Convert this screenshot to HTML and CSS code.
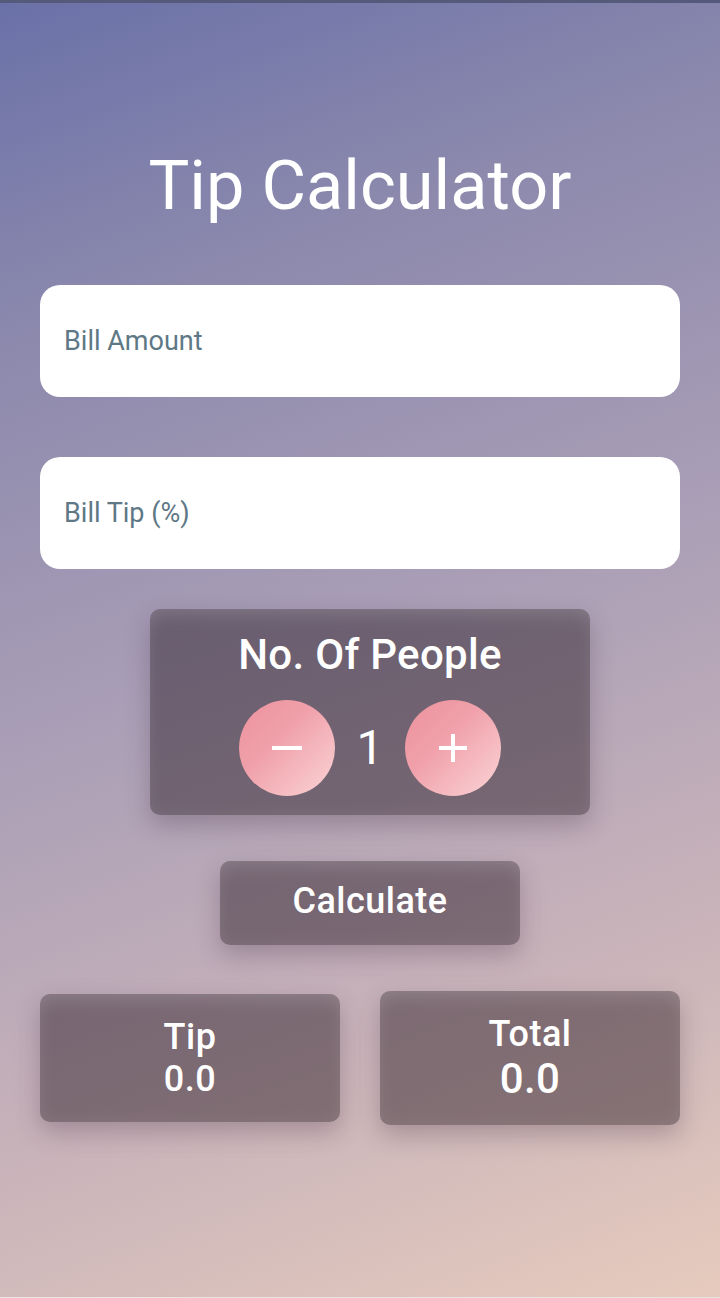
FILE: index.html
```html
<!DOCTYPE html>
<html lang="en">
<head>
<meta charset="utf-8">
<title>Tip Calculator</title>
<link rel="stylesheet" href="styles.css">
</head>
<body>
<div class="statusbar"></div>
<main class="app">
  <h1 class="title">Tip Calculator</h1>
  <input class="field field-first" type="text" placeholder="Bill Amount">
  <input class="field field-second" type="text" placeholder="Bill Tip (%)">
  <section class="card people">
    <div class="people-title">No. Of People</div>
    <div class="stepper">
      <button class="round-btn" aria-label="decrease">
        <svg width="32" height="32" viewBox="0 0 32 32"><path d="M1 16H31" stroke="#fff" stroke-width="4" stroke-linecap="butt"/></svg>
      </button>
      <span class="count">1</span>
      <button class="round-btn" aria-label="increase">
        <svg width="32" height="32" viewBox="0 0 32 32"><path d="M2 16H30M16 2V30" stroke="#fff" stroke-width="4" stroke-linecap="butt"/></svg>
      </button>
    </div>
  </section>
  <button class="card calc">Calculate</button>
  <div class="results">
    <div class="card result tip">
      <div class="label">Tip</div>
      <div class="value">0.0</div>
    </div>
    <div class="card result total">
      <div class="label">Total</div>
      <div class="value">0.0</div>
    </div>
  </div>
</main>
<div class="bottombar"></div>
</body>
</html>
```

FILE: styles.css
```css
html, body {
  margin: 0;
  padding: 0;
}
body {
  width: 720px;
  height: 1298px;
  overflow: hidden;
  display: flex;
  flex-direction: column;
  font-family: Roboto, "Liberation Sans", sans-serif;
  color: #fff;
  background: linear-gradient(160deg, #6a71a8 0%, #8c89ad 22%, #a99eb6 48%, #c9b3ba 75%, #e6cbbd 100%);
}
.statusbar {
  height: 3px;
  background: #55597a;
  flex: none;
}
.bottombar {
  height: 1px;
  background: #ebe3df;
  flex: none;
  margin-top: auto;
}
.app {
  display: flex;
  flex-direction: column;
  align-items: center;
  padding: 143px 40px 0;
}
.title {
  margin: 0;
  font-size: 68.5px;
  line-height: 80px;
  font-weight: 400;
}
.field {
  box-sizing: border-box;
  width: 640px;
  height: 112px;
  border: none;
  outline: none;
  border-radius: 20px;
  background: #fff;
  padding: 0 24px;
  font-family: Roboto, "Liberation Sans", sans-serif;
  font-size: 27px;
  color: #5e7886;
}
.field::placeholder {
  color: #5e7886;
}
.field-first {
  margin-top: 59px;
}
.field-second {
  margin-top: 60px;
}
.card {
  box-sizing: border-box;
  border-radius: 10px;
  background: rgba(30, 15, 25, 0.44);
  box-shadow: 0 10px 24px rgba(60, 40, 60, 0.28), inset 0 16px 22px -12px rgba(255, 255, 255, 0.14), inset 0 0 18px rgba(255, 255, 255, 0.07);
  color: #fff;
}
.people {
  margin-top: 40px;
  margin-left: 20px;
  width: 440px;
  height: 206px;
  padding-top: 22px;
  display: flex;
  flex-direction: column;
  align-items: center;
}
.people-title {
  font-size: 42px;
  line-height: 48px;
  font-weight: 500;
  letter-spacing: 0.3px;
}
.stepper {
  margin-top: 21px;
  display: flex;
  align-items: center;
  gap: 22px;
}
.round-btn {
  width: 96px;
  height: 96px;
  border-radius: 50%;
  border: none;
  padding: 0;
  display: flex;
  align-items: center;
  justify-content: center;
  background: linear-gradient(135deg, #ec929d 0%, #f0a0aa 40%, #f6bfc4 75%, #fad3d6 100%);
}
.count {
  font-size: 48px;
  line-height: 56px;
  font-weight: 400;
}
.calc {
  margin-top: 46px;
  margin-left: 20px;
  width: 300px;
  height: 84px;
  border: none;
  font-family: Roboto, "Liberation Sans", sans-serif;
  font-size: 36px;
  font-weight: 500;
  letter-spacing: 0.5px;
  padding: 0 0 5px 0;
}
.results {
  margin-top: 46px;
  width: 640px;
  display: flex;
  justify-content: space-between;
  align-items: center;
}
.result {
  width: 300px;
  display: flex;
  flex-direction: column;
  align-items: center;
  justify-content: center;
  font-weight: 500;
}
.tip {
  height: 128px;
}
.total {
  height: 134px;
}
.label {
  font-size: 36px;
  line-height: 42px;
  letter-spacing: 0.5px;
}
.tip .value {
  font-size: 36px;
  line-height: 42px;
  letter-spacing: 0.5px;
}
.total .value {
  font-size: 42px;
  line-height: 48px;
  letter-spacing: 0.3px;
}
```
